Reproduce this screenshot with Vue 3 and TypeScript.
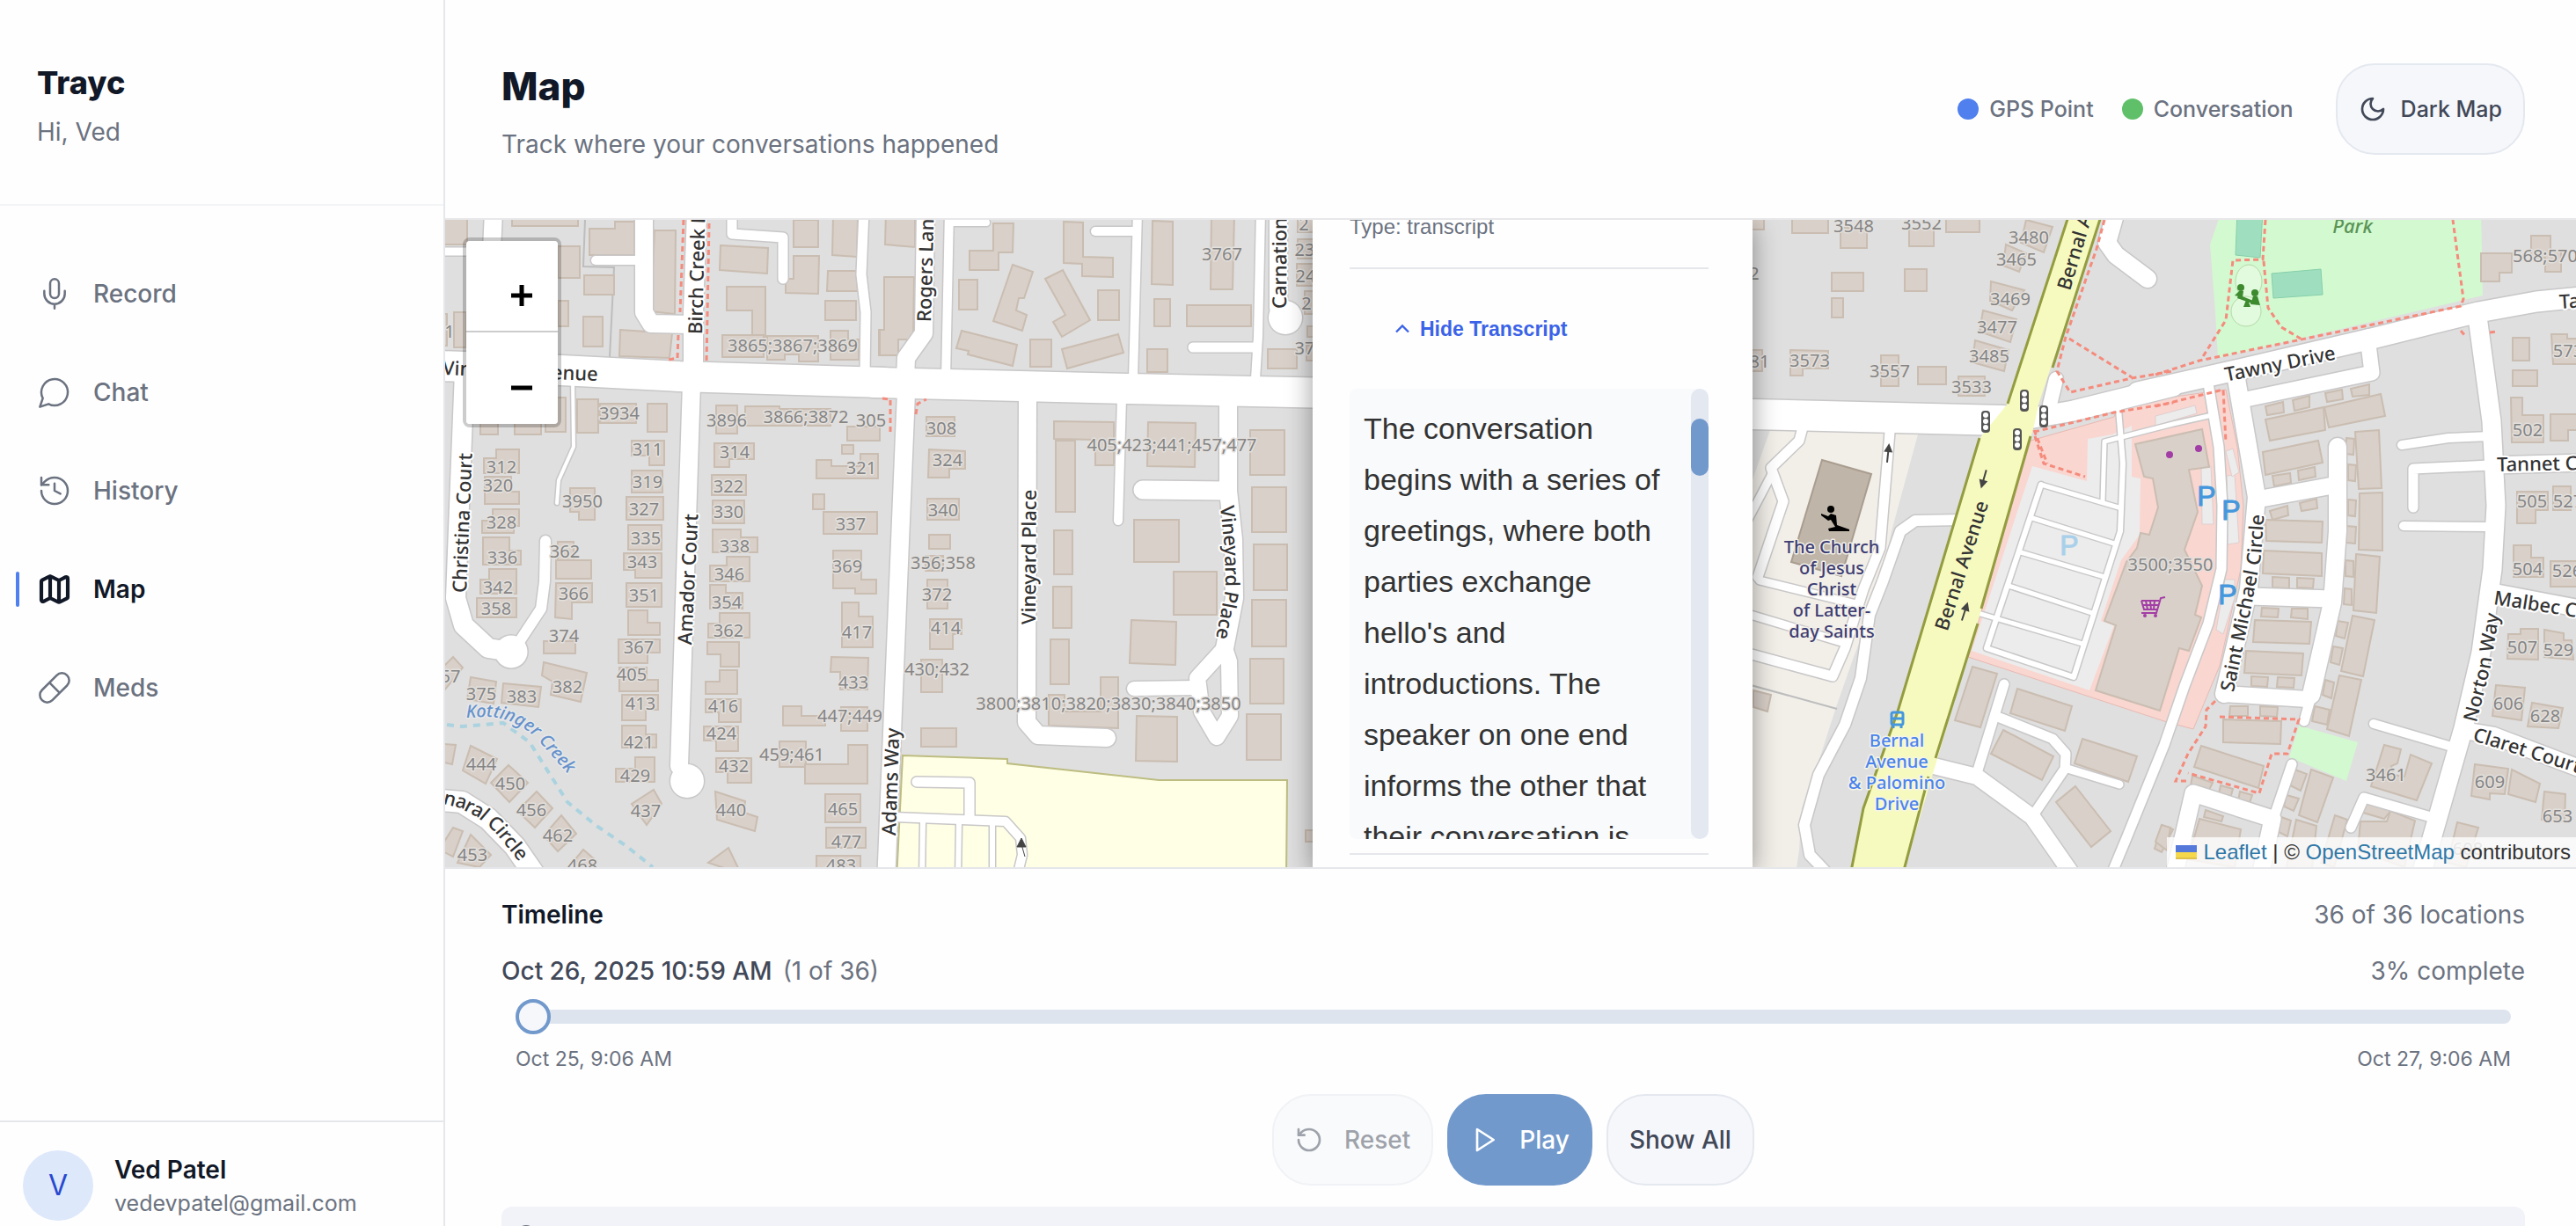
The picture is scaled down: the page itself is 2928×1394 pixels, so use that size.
<script setup lang="ts">
import { ref } from 'vue'

interface Tile {
  x: number
  y: number
  land: [string, string][]
  buildings: string
  roads: [number, string][]
  paths: string[]
  numbers: string
  streets: [string, string][]
}

const nav = [
  { id: 'record', label: 'Record' },
  { id: 'chat', label: 'Chat' },
  { id: 'history', label: 'History' },
  { id: 'map', label: 'Map' },
  { id: 'meds', label: 'Meds' },
]
const active = ref('map')
const position = ref(1)

// Tile grid units: 3 per horizontal pixel, 1568 per 750 vertical pixels.
const px = (t: Tile, x: number) => Math.round(t.x + x / 3)
const py = (t: Tile, y: number) => Math.round(t.y + (y * 750) / 1568)

function points(t: Tile, s: string): string {
  return s
    .trim()
    .split(/\s+/)
    .map((p) => {
      const [x, y] = p.split(',').map(Number)
      return `${px(t, x)},${py(t, y)}`
    })
    .join(' ')
}

// A shape with four bare numbers is a rectangle, otherwise a list of x,y pairs.
function shapes(t: Tile): string[] {
  return t.buildings
    .split(';')
    .map((s) => s.trim())
    .filter((s) => s.length > 0)
    .map((s) => {
      const n = s.split(/[\s,]+/).map(Number)
      if (n.length === 4) {
        const [a, b, c, d] = n
        return points(t, `${a},${b} ${c},${b} ${c},${d} ${a},${d}`)
      }
      return points(t, s)
    })
}

const tiles: Tile[] = [
  {
    x: 505,
    y: 240,
    land: [],
    buildings: `0,0,78,80; 232,0,455,36; 388,84,463,158; 478,152,578,198; 0,245,8,320; 33,240,75,324; 388,214,422,274;
      475,250,541,322; 454,448,524,526; 346,444,414,524; 240,470,330,530; 124,500,182,530; 693,458,758,524; 530,458,655,504;
      136,588 178,588 178,566 254,566 254,622 136,622; 138,632 228,632 228,666 254,666 254,696 138,696;
      130,736 166,736 166,708 254,708 254,748 238,748 238,766 130,766; 133,776 221,776 221,806 262,806 262,840 133,840;
      124,876 154,876 154,850 247,850 247,910 124,910; 112,920,245,966; 430,658 512,658 512,734 460,734 460,716 430,716;
      388,786,440,830; 382,830,500,874; 382,884 505,884 505,930 434,930 434,970 379,966; 340,1022,446,1052;
      340,1072 486,1098 466,1166 362,1150 370,1118 332,1104; 90,1108 178,1118 168,1170 78,1160; 200,1122 330,1132 322,1180 196,1168;
      0,1080 30,1060 62,1086 0,1140; 90,1272 180,1302 140,1362 64,1330; 0,1266 38,1270 28,1316 0,1310;
      220,1318 284,1358 222,1404 160,1358; 316,1380 370,1420 310,1466 250,1426; 400,1436 450,1480 388,1522 338,1484;
      475,1518 520,1545 500,1568 415,1568; 90,1482 158,1530 120,1560 46,1550; 0,1500 30,1465 62,1474 30,1534 0,1525;
      640,545 751,545 751,604 698,604 698,582 640,582; 640,616,745,668; 620,680,746,734; 628,746,740,804;
      612,814 740,814 740,872 652,872 652,852 612,852; 622,884,740,940; 628,950 692,950 692,978 734,978 734,1008 628,1008;
      594,1018 734,1018 734,1050 692,1050 692,1074 594,1074; 598,1085 690,1085 690,1114 728,1114 728,1142 598,1142;
      606,1150 728,1150 728,1186 686,1186 686,1210 606,1210; 606,1222 686,1222 686,1244 722,1244 722,1276 606,1276;
      586,1326 652,1326 652,1298 717,1298 717,1356 586,1356; 714,1376 740,1410 690,1460 638,1410;
      928,462,998,528; 1027,465,1142,510; 1142,470,1318,510; 1374,512,1484,546; 922,552 1057,552 1057,590 972,590 972,608 922,608;
      912,628,1028,676; 916,688,1022,742; 914,756 1012,756 1012,776 1068,776 1068,812 914,812;
      906,842 964,842 964,822 1040,822 1040,880 906,880; 906,888 960,888 960,908 1016,908 1016,946 906,946;
      900,980 940,980 940,956 1040,956 1040,1014 900,1014; 898,1024 1004,1024 1004,1082 942,1082 942,1054 898,1054;
      892,1118 940,1118 940,1092 1000,1092 1000,1148 892,1148; 892,1160 1010,1160 1010,1214 936,1214 936,1192 892,1192;
      886,1226 1002,1226 1002,1284 928,1284 928,1258 886,1258; 928,1300 1046,1300 1046,1358 966,1358 966,1334 928,1334;
      924,1380 1026,1402 1022,1430 1068,1440 1058,1474 930,1446; 968,1514 1010,1575 900,1550;
      496,42 582,42 582,26 648,26 648,104 496,104; 716,46 790,46 786,244 706,238; 600,282 776,290 768,350 598,346;
      942,82 1105,88 1100,148 940,140; 964,180 1094,180 1094,300 1050,300 1050,236 964,236; 947,294,1090,348;
      1102,296 1276,296 1276,358 1210,358 1210,340 1160,340 1160,354 1102,354; 1318,284 1376,284 1376,305 1412,305 1412,354 1318,354; 1192,20,1274,86;
      1190,106 1278,106 1274,196 1164,194 1164,160 1192,160; 1326,10 1410,10 1406,108 1324,104; 1308,142 1404,142 1410,190 1306,190;
      1300,214,1405,260; 1482,282,1500,342; 1357,556,1394,576; 1270,592 1320,592 1320,606 1418,606 1418,578 1478,578 1478,636 1270,636;
      1258,674,1296,708; 1294,716,1476,768; 1326,808 1422,808 1422,876 1472,876 1472,910 1402,910 1402,896 1326,896;
      1355,930 1412,930 1412,964 1462,964 1462,1038 1355,1038; 1320,1060 1447,1062 1443,1138 1350,1138 1350,1096 1318,1096;
      1156,1178 1218,1178 1218,1200 1298,1200 1298,1224 1156,1224; 1354,1180,1442,1236; 1144,1260,1233,1322;
      1230,1314 1378,1314 1378,1268 1442,1268 1442,1362 1230,1362; 1300,1386,1418,1452; 1302,1466,1436,1514; 1268,1532,1420,1575`,
    roads: [
      [34, '-20,367 400,378 800,392 1500,408'],
      [22, '70,380 50,700 38,920 65,985 150,1040 228,1048'],
      [37, '228,1048 229,1048'],
      [12, '250,1030 330,945 343,880 344,785'],
      [20, '168,0 160,140'],
      [9, '-10,97 90,97'],
      [10, '515,118 670,118'],
      [20, '682,0 680,240 705,268 840,270'],
      [22, '862,0 850,240 848,400'],
      [20, '842,410 800,1320'],
      [38, '828,1355 829,1355'],
      [11, '980,0 980,55 1155,62 1155,160'],
      [11, '1430,0 1422,150 1437,240 1435,390'],
      [4, '438,400 440,560 390,640 385,695'],
      [24, '-10,1400 60,1405 150,1445 240,1510 320,1590'],
    ],
    paths: ['815,20 803,240', '797,295 795,350 765,354', '903,30 893,360'],
    numbers: `3934@597,480 3896@962,497 3866;3872@1232,490 305@1455,497 311@693,566 319@693,643 327@682,709 335@686,777
      343@676,835 351@680,914 367@663,1036 405@640,1102 413@668,1170 421@664,1262 429@651,1342 437@688,1425 314@990,572
      322@969,655 330@969,716 338@990,796 346@973,863 354@962,930 362@969,998 416@950,1178 424@944,1242 432@986,1319
      440@978,1424 321@1422,610 337@1385,744 369@1375,845 417@1408,1002 433@1396,1121 447;449@1382,1200 459;461@1186,1293
      465@1359,1421 477@1371,1500 483@1353,1556 312@195,608 320@184,653 328@194,740 336@197,824 342@184,894 358@178,944
      3950@471,690 362@412,810 366@442,909 374@407,1009 382@421,1132 375@127,1148 383@263,1155 57@22,1106 444@125,1315
      450@224,1362 456@298,1424 462@388,1484 468@470,1556 453@97,1530 3865;3867;3869@1188,320 1@18,286`,
    streets: [
      ['Vineyard Avenue', '-6,372 600,388'],
      ['Christina Court', '50,908 72,560'],
      ['Amador Court', '818,1030 842,700'],
      ['Birch Creek Drive', '856,292 872,-200'],
      ['naral Circle', '0,1392 60,1402 130,1428 190,1464 280,1540'],
    ],
  },
  {
    x: 1000,
    y: 240,
    land: [['school', '78,1294 435,1302 435,1313 950,1352 1390,1352 1385,1590 58,1590']],
    buildings: `20,0 120,0 120,86 18,80; 16,156 118,156 114,306 64,306 64,342 0,342 0,282 14,282;
      386,30 456,30 454,98 406,98 406,140 306,140 306,94 386,94; 271,164,334,234;
      452,128 522,144 492,208 474,206 464,236 502,246 486,284 388,262; 280,284 468,318 452,368 300,340 302,332 262,326;
      512,306,586,370; 626,26 694,28 694,108 796,110 794,156 690,154 690,126 626,124; 564,160 624,140 716,260 620,298 590,264 634,246;
      745,188,816,260; 620,328 812,292 830,336 640,374; 930,24 1000,26 998,176 926,174; 1132,10 1210,10 1204,186 1128,186;
      937,210,990,274; 1048,224,1266,274; 912,328,980,382; 1322,328,1422,374; 1424,10,1490,50; 1424,66,1490,112; 1422,126,1490,178;
      1450,190,1490,244; 1458,274,1490,300; 1455,320,1490,356; 160,490,255,536; 168,566 292,570 290,612 236,612 236,634 166,634;
      163,684,270,734; 168,770,240,802; 155,820,215,856; 163,876,231,944; 170,970 280,970 280,1006 250,1006 250,1042 170,1042;
      142,1066,214,1144; 140,1230,262,1274; 594,500 798,502 798,604 734,604 734,543 594,541; 600,545,665,714;
      915,502 1076,504 1074,608 913,606; 594,758,658,864; 590,892,654,992; 583,1018,646,1124;
      576,1150 630,1150 630,1190 752,1190 752,1108 814,1108 812,1230 576,1224; 866,734,1020,834; 1003,858,1150,960;
      858,972 1012,976 1008,1078 853,1074; 875,1200 1015,1202 1013,1308 872,1306; 1263,521,1380,627; 1268,656,1385,764;
      1274,792,1390,902; 1270,925,1385,1034; 1264,1064,1378,1170; 1252,1196,1368,1304; 1453,1472,1490,1500`,
    roads: [
      [34, '-20,407 850,423 1550,433'],
      [20, '155,0 150,290 90,350 88,400'],
      [10, '236,0 224,400'],
      [8, '236,28 362,28'],
      [20, '90,430 45,1190 20,1600'],
      [10, '880,0 865,400'],
      [10, '735,48 870,48'],
      [10, '1298,0 1290,300 1280,400'],
      [11, '1068,324 1285,324'],
      [20, '1360,0 1360,230'],
      [38, '1382,252 1383,252'],
      [20, '504,440 502,1215 540,1245 775,1252'],
      [10, '825,445 813,735'],
      [21, '896,662 1180,665'],
      [20, '1188,450 1187,665 1207,780 1210,920 1175,1040'],
      [18, '1175,1040 1083,1110 1098,1190 1148,1250 1195,1200 1190,1070 1175,1040'],
      [16, '866,1136 1080,1133'],
      [11, '125,1356 305,1358 305,1440'],
      [10, '40,1440 430,1450 480,1490 485,1530 465,1590'],
      [6, '147,1455 145,1590'],
      [6, '270,1455 268,1590'],
      [6, '385,1455 383,1590'],
    ],
    paths: ['10,445 36,448 36,530', '122,482 128,458 160,448'],
    numbers: `3767@1168,102 2@1445,32 23@1448,93 24@1452,155 2@1456,220 37@1448,327 308@210,517 324@230,592 340@217,710
      356;358@215,837 372@195,911 414@225,990 430;432@194,1090 405;423;441;457;477@996,556 3800;3810;3820;3830;3840;3850@780,1170`,
    streets: [
      ['Rogers Lane', '150,264 164,-100'],
      ['Vineyard Place', '508,982 510,600'],
      ['Vineyard Place', '1186,700 1200,800 1202,900 1165,1040'],
      ['Carnation Court', '1362,232 1364,-200'],
      ['Adams Way', '30,1485 46,1200'],
    ],
  },
  {
    x: 1990,
    y: 240,
    land: [
      ['church', '0,517 570,532 480,760 440,900 350,1060 290,1180 240,1290 175,1420 165,1520 150,1590 -30,1590 -30,517'],
      ['plain', '-30,517 65,520 0,650 -30,690'],
      ['retail', '955,545 1240,490 1250,460 1620,425 1660,560 1680,700 1670,850 1600,1080 1510,1232 1420,1215 740,1060'],
      ['parking', '960,606 1145,642 1150,542 1232,530 1300,510 1298,632 1328,636 1325,770 1262,830 1195,975 1240,985 1155,1140 752,1046'],
      ['strip', '1380,510 1380,488 1515,462 1520,480'],
      ['strip', '1535,610 1570,606 1578,745 1540,745'],
      ['strip', '1622,630 1650,628 1665,788 1626,792'],
      ['strip', '1620,570 1645,565 1665,620 1640,632'],
      ['strip', '1618,875 1650,875 1650,920 1612,1005 1588,995'],
    ],
    buildings: `-20,0,46,44; 142,0,264,52; 305,40,395,88; 540,40,623,84; 667,0,780,50; 277,147,384,190; 277,206,314,254; 526,138,599,190;
      -20,330,40,380; 135,330 263,332 263,374 178,374 178,390 135,390; 444,343,503,416; 571,370,665,412; 708,394,798,440;
      940,20 1028,38 1000,98 920,76; 870,80 940,100 915,144 862,130; 820,168 932,188 890,236 816,214;
      792,236 905,258 886,312 780,286; 765,308 880,330 865,380 755,360;
      1312,555 1540,518 1562,608 1495,615 1525,715 1478,805 1540,890 1515,960 1535,965 1495,1045 1460,1040 1395,1187 1175,1140 1245,985 1205,975 1280,835 1318,800 1330,765 1360,770 1390,705 1370,635 1340,632;
      757,1082 840,1100 782,1228 696,1210; 908,1136 1094,1176 1070,1236 884,1194; 860,1234 1032,1296 992,1352 820,1290;
      1130,1254 1318,1296 1288,1356 1104,1312; 1108,1368 1228,1474 1160,1512 1040,1404; 1400,1460 1440,1470 1400,1525 1376,1515;
      10,1140 70,1150 58,1190 8,1180`,
    roads: [
      [34, '-200,478 0,482 860,498'],
      [11, '178,515 165,545 70,610 110,690 25,870'],
      [9, '75,620 -30,760'],
      [11, '475,525 440,800 385,900 320,1040 280,1105 -30,1048'],
      [9, '30,878 360,935'],
      [9, '-20,955 310,1025'],
      [12, '720,733 560,735 510,760 450,880 405,960 375,1110 320,1220 230,1340 182,1460 200,1530 270,1580'],
      [20, '1255,-20 1215,75 1245,105 1352,160'],
      [23, '930,495 1100,475 1440,415'],
      [16, '1040,400 1020,460'],
      [18, '600,1315 770,1345 960,1440 1110,1590'],
      [11, '770,1335 865,1125'],
      [11, '850,1205 1030,1255 1075,1290 1070,1325 970,1430'],
      [9, '1080,1325 1258,1364'],
      [6, '990,650 805,1040 1100,1108 1260,760 1270,600 1253,470'],
      [5, '990,650 1255,705'],
      [5, '960,730 1240,790'],
      [5, '920,812 1205,870'],
      [5, '880,890 1165,955'],
      [5, '775,955 1130,1028'],
      [5, '1200,690 1205,548 1440,505 1560,488'],
    ],
    paths: [
      '1205,20 1180,90 1075,300 1045,380 1090,430 1300,398 1440,380',
      '1085,303 1300,395',
      '965,525 1240,478 1440,455',
      '970,535 1000,600 1140,632',
      '965,520 1010,600',
    ],
    numbers: `3548@352,35 3552@582,30 3480@948,63 3465@906,115 3469@884,210 3477@840,275 3485@813,345 3573@200,355
      3557@473,381 3533@752,419 81@30,357 2@12,148`,
    streets: [],
  },
  {
    x: 2450,
    y: 240,
    land: [
      ['park', '225,0 186,80 205,240 212,350 1115,200 1110,0'],
      ['park', '488,1222 690,1262 652,1355 455,1298'],
      ['pitch', '280,0 366,0 356,110 272,104'],
      ['pitch', '396,148 564,138 570,198 402,208'],
    ],
    buildings: `376,464 435,454 438,478 380,486; 468,450 524,440 526,466 474,474; 580,432 636,424 640,448 584,454; 666,422 728,412 730,436 672,442;
      374,496 572,466 580,520 390,546; 577,466 768,434 782,488 590,514; 366,572 556,546 570,598 376,628; 400,630 460,622 462,646 404,654;
      486,616 542,608 546,632 490,640; 650,540 678,542 676,580 650,578; 658,602 684,604 682,642 658,640; 680,524 762,520 770,658 692,660;
      390,712 450,700 452,724 398,734; 492,694 550,684 552,706 498,712; 376,734 570,738 568,788 378,784; 370,808 568,814 566,868 366,862;
      696,672 774,670 774,808 694,804; 656,686 684,688 682,726 656,724; 650,748 684,750 682,790 650,788; 685,816 766,822 752,956 674,950;
      648,830 676,832 674,870 648,868; 645,896 670,898 668,936 642,934; 398,870 455,872 455,896 398,894; 484,872 540,874 538,896 482,894;
      362,942 420,944 418,966 360,964; 466,944 520,946 518,970 462,966; 338,972 532,976 526,1028 332,1024; 308,1046 503,1052 498,1104 302,1098;
      328,1106 384,1108 382,1132 326,1130; 418,1108 474,1110 470,1134 414,1132; 254,1176 316,1178 314,1200 252,1200; 358,1178 416,1180 414,1202 356,1200;
      232,1208 430,1212 426,1266 230,1262; 672,962 748,972 708,1106 632,1094; 622,974 656,978 646,1016 614,1010; 605,1034 638,1040 628,1078 598,1072;
      626,1104 702,1114 660,1248 584,1232; 578,1114 610,1120 600,1158 570,1150; 542,1178 594,1186 586,1220 534,1212;
      155,1272 368,1320 350,1372 132,1322; 125,1342 194,1358 180,1380 120,1366; 222,1366 264,1374 256,1396 216,1386; 288,1380 330,1388 322,1408 282,1400;
      474,1328 516,1338 494,1378 460,1366; 448,1388 488,1396 470,1426 438,1416; 530,1328 606,1346 552,1452 488,1436; 430,1440 462,1448 450,1486 420,1476;
      480,1446 548,1462 530,1580 446,1560; 612,1436 655,1446 610,1560 565,1550; 780,1268 838,1280 826,1312 804,1320 810,1340 850,1345 870,1292 942,1312 890,1400 734,1368;
      150,1444 290,1470 270,1560 110,1540; 170,1424 232,1438 224,1450 165,1440; 720,1406 804,1424 780,1444 708,1430;
      700,1450 790,1450 800,1426 886,1448 850,1560 690,1520; 1030,1452 1100,1466 1060,1560 996,1550; 0,1500 20,1460 50,1466 40,1520;
      1110,100 1216,100 1216,146 1172,146 1172,168 1110,168; 1280,58 1348,58 1348,96 1384,96 1384,144 1330,144 1330,110 1280,110;
      1218,302,1276,356; 1350,292 1404,292 1404,304 1450,304 1450,364 1356,364; 1218,378,1302,416; 1212,444 1252,444 1252,486 1324,486 1324,550 1216,550;
      1346,482 1450,482 1450,520 1408,520 1408,546 1346,546; 1232,666 1338,666 1338,710 1296,710 1296,742 1232,742; 1356,654,1416,710;
      1220,794 1282,794 1282,824 1324,824 1324,870 1220,870; 1346,832,1450,892; 1204,1006 1246,1006 1246,994 1306,994 1306,1066 1200,1064;
      1326,996 1392,1004 1392,1020 1420,1020 1424,1066 1326,1060; 1160,1126 1260,1134 1248,1210 1148,1200; 1284,1168 1390,1182 1374,1230 1268,1226;
      1090,1314 1202,1326 1190,1386 1140,1384 1140,1398 1076,1390; 1214,1328 1312,1360 1296,1404 1204,1386; 1326,1380 1398,1386 1394,1450 1316,1446`,
    roads: [
      [23, '-60,430 300,375 750,302 1100,240 1300,215 1450,205'],
      [11, '180,410 215,560 228,700 225,850 180,980 100,1130 30,1270 -100,1490 -160,1590'],
      [20, '275,400 345,680 318,900 235,1148'],
      [18, '235,1148 520,1160'],
      [19, '345,685 620,650'],
      [20, '620,560 622,760 602,930 530,1150'],
      [11, '540,1130 508,1212'],
      [19, '320,915 600,922'],
      [17, '310,448 738,384 722,300'],
      [21, '1097,250 1145,500 1160,700 1150,850 1110,1050 1050,1230 940,1500 900,1590'],
      [10, '840,557 1000,540 1140,535'],
      [11, '878,705 880,612 1140,605'],
      [10, '845,748 1140,750'],
      [19, '1150,605 1450,598'],
      [19, '1150,905 1450,945'],
      [19, '1060,1235 1150,1245 1450,1325'],
      [10, '745,1218 1020,1275'],
      [11, '665,1465 710,1395 940,1440'],
      [11, '465,1315 400,1450'],
      [19, '60,1590 130,1385 400,1445 355,1590'],
    ],
    paths: [
      '0,388 150,355 540,300 1040,225 1050,210 1015,20',
      '375,20 365,115 265,118 240,260 160,350',
      '370,120 385,230 430,275 495,303',
      '0,465 230,425 240,550',
      '1040,285 1060,298',
      '1140,288 1160,286',
      '220,1203 490,1208 450,1290 395,1290 355,1385 110,1335',
      '205,1165 175,1185 170,1225 110,1290 70,1355 110,1355',
    ],
    numbers: `568;570@1330,106 573@1408,333 502@1268,520 505@1284,690 527@1408,690 504@1270,851 526@1404,856 507@1250,1036
      529@1374,1043 606@1202,1170 628@1330,1200 609@1140,1356 653@1372,1438 3461@786,1340 3500;3550@51,840 608@1065,1516`,
    streets: [
      ['Tawny Drive', '237,388 620,334'],
      ['Tawny Drive', '1378,216 1900,190'],
      ['Saint Michael Circle', '242,1142 300,950 335,820 355,650'],
      ['Norton Way', '1072,1212 1120,1080 1160,900'],
      ['Tannet Court', '1165,603 1900,592'],
      ['Malbec Court', '1155,918 1400,945 1900,1000'],
      ['Claret Court', '1085,1242 1434,1318 1600,1360'],
    ],
  },
]

const roadCoords = tiles.flatMap((t) => t.roads.map(([w, s]) => ({ w, p: points(t, s) })))
const land = tiles.flatMap((t) => t.land.map(([kind, s]) => ({ kind, p: points(t, s) })))
const buildings = tiles.flatMap(shapes)
const footpaths = tiles.flatMap((t) => t.paths.map((s) => points(t, s)))
const houseNumbers = tiles.flatMap((t) =>
  t.numbers.trim().split(/\s+/).map((s) => {
    const [text, at] = s.split('@')
    const [x, y] = at.split(',').map(Number)
    return { text, x: px(t, x), y: py(t, y) + 7 }
  }),
)
const streets = tiles.flatMap((t, i) =>
  t.streets.map(([text, s], j) => ({ text, id: `street-${i}-${j}`, d: 'M' + points(t, s).replace(/ /g, ' L') })),
)
const east = tiles[2]
const bernal = points(east, '1090,0 875,458 785,535 500,1190 385,1420 335,1590 512,1590 745,1050 965,510 980,460 1200,0')
const bernalWest = [points(east, '1090,0 875,458'), points(east, '780,540 500,1190 385,1420 335,1590')]
const bernalEast = [points(east, '1200,0 1030,372'), points(east, '955,535 785,945'), points(east, '775,980 630,1300'), points(east, '605,1345 512,1590')]
const bernalLabels = [
  { id: 'bernal-s', d: 'M' + points(east, '648,996 860,530').replace(' ', ' L'), text: 'Bernal Avenue' },
  { id: 'bernal-n', d: 'M' + points(east, '1064,186 1230,-200').replace(' ', ' L'), text: 'Bernal Avenue' },
]
const signals = [[800, 500], [932, 449], [998, 487], [908, 542]].map(([x, y]) => `translate(${px(east, x)} ${py(east, y)})`)
const arrows = [[468, 578, 6], [795, 636, 196], [728, 953, 18]].map(([x, y, r]) => `translate(${px(east, x)} ${py(east, y)}) rotate(${r})`)
const church = ['The Church', 'of Jesus', 'Christ', 'of Latter-', 'day Saints']
const stop = ['Bernal', 'Avenue', '& Palomino', 'Drive']
</script>

<template>
  <div class="app">
    <aside class="sidebar">
      <div class="brand">
        <h2>Trayc</h2>
        <p>Hi, Ved</p>
      </div>
      <nav class="nav">
        <a v-for="n in nav" :key="n.id" href="#" :class="{ on: n.id === active }" @click.prevent="active = n.id">
          <svg class="icon" viewBox="0 0 24 24" aria-hidden="true">
            <g v-if="n.id === 'record'"><rect x="9" y="2" width="6" height="13" rx="3" /><path d="M19 10v2a7 7 0 0 1-14 0v-2M12 19v3" /></g>
            <path v-else-if="n.id === 'chat'" d="M7.9 20A9 9 0 1 0 4 16.1L2 22Z" />
            <g v-else-if="n.id === 'history'"><path d="M3 12a9 9 0 1 0 9-9 9.75 9.75 0 0 0-6.74 2.74L3 8" /><path d="M3 3v5h5M12 7v5l4 2" /></g>
            <g v-else-if="n.id === 'map'"><path d="M14.1 5.55a2 2 0 0 0 1.8 0l3.65-1.83A1 1 0 0 1 21 4.62v12.76a1 1 0 0 1-.55.9l-4.55 2.27a2 2 0 0 1-1.8 0l-4.2-2.1a2 2 0 0 0-1.8 0l-3.65 1.83A1 1 0 0 1 3 19.38V6.62a1 1 0 0 1 .55-.9L8.1 3.45a2 2 0 0 1 1.8 0zM15 5.76v15M9 3.24v15" /></g>
            <path v-else d="m10.5 20.5 10-10a4.95 4.95 0 1 0-7-7l-10 10a4.95 4.95 0 1 0 7 7ZM8.5 8.5l7 7" />
          </svg>
          <span>{{ n.label }}</span>
        </a>
      </nav>
      <div class="user">
        <span class="avatar">V</span>
        <div>
          <strong>Ved Patel</strong>
          <span class="mail">vedevpatel@gmail.com</span>
        </div>
      </div>
    </aside>

    <main class="main">
      <header class="head">
        <div>
          <h1>Map</h1>
          <p>Track where your conversations happened</p>
        </div>
        <div class="tools">
          <ul class="legend">
            <li><i class="dot gps"></i>GPS Point</li>
            <li><i class="dot talk"></i>Conversation</li>
          </ul>
          <button type="button" class="btn dark">
            <svg class="icon" viewBox="0 0 24 24" aria-hidden="true"><path d="M12 3a6 6 0 0 0 9 9 9 9 0 1 1-9-9Z" /></svg>
            Dark Map
          </button>
        </div>
      </header>

      <section class="map" aria-label="Map">
        <svg class="canvas" viewBox="506 250 2422 736" preserveAspectRatio="xMidYMid slice">
          <rect x="0" y="0" width="3400" height="1400" fill="#dfdfdf" />
          <polygon v-for="(l, i) in land" :key="'l' + i" :points="l.p" :class="l.kind" />
          <polyline class="fence" points="665,250 663,303 698,304 693,406" />
          <polyline class="fence" points="1990,779 2088,806" />
          <polyline class="creek" points="508,824 525,826 572,822 602,844 645,912 678,939 712,962 742,986" />
          <polygon v-for="(b, i) in buildings" :key="'b' + i" :points="b" class="building" />
          <polygon points="2071,523 2127,539 2093,655 2036,639" class="chapel" />
          <g class="play"><ellipse cx="2556" cy="320" rx="15" ry="19" /><ellipse cx="2553" cy="354" rx="17" ry="17" /></g>
          <polyline v-for="(r, i) in roadCoords" :key="'c' + i" :points="r.p" :stroke-width="r.w + 3" class="casing" />
          <polyline v-for="(r, i) in roadCoords" :key="'r' + i" :points="r.p" :stroke-width="r.w" class="road" />
          <polygon :points="bernal" fill="#f7fabf" />
          <polyline v-for="(b, i) in bernalWest.concat(bernalEast)" :key="'e' + i" :points="b" class="edge" />
          <polyline v-for="(f, i) in footpaths" :key="'f' + i" :points="f" class="foot" />
          <g class="numbers">
            <text v-for="(n, i) in houseNumbers" :key="'n' + i" :x="n.x" :y="n.y">{{ n.text }}</text>
          </g>
          <defs>
            <path v-for="s in streets" :id="s.id" :key="s.id" :d="s.d" />
            <path v-for="s in bernalLabels" :id="s.id" :key="s.id" :d="s.d" />
            <path id="kottinger" d="M530,816 L560,815 Q590,820 610,840 L650,885" />
          </defs>
          <g class="streets">
            <text v-for="s in streets" :key="s.id" dy="8"><textPath :href="'#' + s.id">{{ s.text }}</textPath></text>
          </g>
          <g class="streets bernal">
            <text v-for="s in bernalLabels" :key="s.id" dy="8"><textPath :href="'#' + s.id">{{ s.text }}</textPath></text>
          </g>
          <text class="creekname"><textPath href="#kottinger">Kottinger Creek</textPath></text>
          <g class="church-name"><text v-for="(c, i) in church" :key="c" x="2082" :y="629 + i * 24">{{ c }}</text></g>
          <g class="stop-name"><text v-for="(c, i) in stop" :key="c" x="2156" :y="849 + i * 24">{{ c }}</text></g>
          <text x="2674" y="265" class="park-name">Park</text>
          <g class="parking-sign">
            <text x="2352" y="631" class="faint">P</text>
            <text x="2508" y="575">P</text>
            <text x="2536" y="591">P</text>
            <text x="2532" y="687">P</text>
          </g>
          <g v-for="s in signals" :key="s" :transform="s">
            <rect x="-5" y="-12" width="10" height="25" rx="4" fill="#555" />
            <circle cy="-7" r="3" fill="#fff" /><circle cy="0" r="3" fill="#fff" /><circle cy="7" r="3" fill="#fff" />
          </g>
          <g v-for="a in arrows" :key="a" :transform="a"><path d="M0 10V-4" stroke="#444" stroke-width="2" /><path d="M-5-2 0-12 5-2Z" fill="#444" /></g>
          <path d="M1161 953l-5 10h10zM1161 960l4 14" fill="#444" stroke="#444" stroke-width="1" />
          <g transform="translate(2070 575)" fill="#000"><circle cx="11" cy="4" r="4" /><path d="M0 9l8 3 3-3 6 2 1 11 14 5v2H9l-1-3 8-2-5-8-3 1-8-6z" /></g>
          <g fill="none" stroke="#a33da6" stroke-width="2"><path d="M2461 679l-5 1-5 17h-17M2434 683h20M2434 683l3 10h15M2439 683l2 10M2444 683l1 10M2449 683l-1 10M2435 688h18" /><circle cx="2438" cy="700" r="1" /><circle cx="2450" cy="700" r="1" /></g>
          <g fill="#a33da6"><circle cx="2466" cy="517" r="4" /><circle cx="2499" cy="510" r="4" /></g>
          <g fill="none" stroke="#4597dd" stroke-width="3"><rect x="2150" y="810" width="13" height="14" rx="2" /><path d="M2150 817h13M2152 824v4M2161 824v4" /></g>
          <g fill="#3d8a2f"><circle cx="2547" cy="327" r="4" /><circle cx="2563" cy="333" r="4" /><path d="M2540 336l5-5h5l-1 7zM2558 346l3-9h5l3 10zM2544 335l22 9-1 3-22-8zM2550 349l3-8h2l3 8z" /></g>
        </svg>

        <div class="zoom">
          <button type="button" aria-label="Zoom in"><svg viewBox="0 0 24 24" aria-hidden="true"><path d="M0 12h24M12 0v24" /></svg></button>
          <button type="button" aria-label="Zoom out"><svg viewBox="0 0 24 24" aria-hidden="true"><path d="M0 12h24" /></svg></button>
        </div>

        <article class="popup">
          <p class="type">Type: transcript</p>
          <button type="button" class="toggle">
            <svg viewBox="0 0 24 24" aria-hidden="true"><path d="m6 15 6-6 6 6" /></svg>
            Hide Transcript
          </button>
          <div class="transcript">
            <p>The conversation begins with a series of greetings, where both parties exchange hello's and introductions. The speaker on one end informs the other that their conversation is</p>
            <span class="track"><span class="thumb"></span></span>
          </div>
        </article>

        <div class="credit">
          <svg viewBox="0 0 24 16" aria-hidden="true"><path fill="#5578db" d="M0 0h24v8H0z" /><path fill="#f6d84c" d="M0 8h24v8H0z" /><path fill="#dfc04a" d="M0 14h24v2H0z" /></svg>
          <span><a href="#">Leaflet</a> | © <a href="#">OpenStreetMap</a> contributors</span>
        </div>
      </section>

      <section class="timeline">
        <div class="row">
          <h3>Timeline</h3>
          <span class="muted">36 of 36 locations</span>
        </div>
        <div class="row second">
          <label for="moment">Oct 26, 2025 10:59 AM <span class="muted">(1 of 36)</span></label>
          <span class="muted">3% complete</span>
        </div>
        <div class="range">
          <input id="moment" v-model.number="position" type="range" min="1" max="36" />
          <div class="ends"><span>Oct 25, 9:06 AM</span><span>Oct 27, 9:06 AM</span></div>
        </div>
        <div class="actions">
          <button type="button" class="btn" disabled>
            <svg class="icon" viewBox="0 0 24 24" aria-hidden="true"><path d="M3 12a9 9 0 1 0 9-9 9.75 9.75 0 0 0-6.74 2.74L3 8" /><path d="M3 3v5h5" /></svg>
            Reset
          </button>
          <button type="button" class="btn primary">
            <svg class="icon" viewBox="0 0 24 24" aria-hidden="true"><path d="m6 3 14 9-14 9z" /></svg>
            Play
          </button>
          <button type="button" class="btn">Show All</button>
        </div>
        <div class="card">
          <svg class="icon" viewBox="0 0 24 24" aria-hidden="true"><circle cx="12" cy="12" r="10" /></svg>
        </div>
      </section>
    </main>
  </div>
</template>

<style>
body {
  margin: 0;
  background: #fefefe;
}
</style>

<style scoped>
* {
  box-sizing: border-box;
}
.app {
  display: flex;
  height: 100vh;
  overflow: hidden;
  font-family: Inter, 'Open Sans', sans-serif;
  font-size: 28px;
  line-height: 40px;
  color: #6b7280;
  background: #fefefe;
}
h1, h2, h3, p, ul {
  margin: 0;
  padding: 0;
}
button {
  font: inherit;
  color: inherit;
}
.icon {
  flex: none;
  width: 32px;
  height: 32px;
  fill: none;
  stroke: currentColor;
  stroke-width: 2;
  stroke-linecap: round;
  stroke-linejoin: round;
}
.sidebar {
  flex: none;
  width: 506px;
  display: flex;
  flex-direction: column;
  border-right: 2px solid #e5e7eb;
}
.brand {
  padding: 70px 42px 62px;
  border-bottom: 2px solid #f3f4f6;
}
.brand h2 {
  margin-bottom: 12px;
  font-size: 36px;
  line-height: 48px;
  font-weight: 800;
  color: #111827;
}
.nav {
  flex: 1;
  padding-top: 44px;
}
.nav a {
  position: relative;
  display: flex;
  align-items: center;
  gap: 24px;
  height: 112px;
  padding-left: 42px;
  font-weight: 500;
  color: #6b7280;
  text-decoration: none;
}
.nav .icon {
  width: 40px;
  height: 40px;
  stroke-width: 1.5;
}
.nav a.on {
  font-weight: 600;
  color: #111827;
}
.nav a.on .icon {
  stroke-width: 2.5;
}
.nav a.on::before {
  content: '';
  position: absolute;
  left: 18px;
  width: 4px;
  height: 40px;
  border-radius: 2px;
  background: #4f80f0;
}
.user {
  display: flex;
  align-items: center;
  gap: 24px;
  padding: 32px 26px 6px;
  border-top: 2px solid #e5e7eb;
}
.avatar {
  width: 80px;
  height: 80px;
  border-radius: 50%;
  background: #dde8fb;
  color: #2848d0;
  font-size: 32px;
  line-height: 80px;
  text-align: center;
}
.user strong {
  display: block;
  font-weight: 600;
  color: #111827;
}
.mail {
  display: block;
  font-size: 25px;
  line-height: 36px;
}
.main {
  flex: 1;
  min-width: 0;
  display: flex;
  flex-direction: column;
}
.head {
  flex: none;
  min-height: 250px;
  display: flex;
  align-items: center;
  justify-content: space-between;
  padding: 0 58px 0 64px;
  border-bottom: 2px solid #e8e8ea;
}
.head h1 {
  margin: 4px 0 16px;
  font-size: 44px;
  line-height: 60px;
  font-weight: 800;
  color: #111827;
}
.tools {
  display: flex;
  align-items: center;
  gap: 48px;
}
.legend {
  display: flex;
  gap: 32px;
  list-style: none;
  font-size: 25px;
  font-weight: 500;
}
.legend li {
  display: flex;
  align-items: center;
  gap: 12px;
}
.dot {
  width: 24px;
  height: 24px;
  border-radius: 50%;
}
.gps {
  background: #4f80ee;
}
.talk {
  background: #5fc069;
}
.btn {
  display: flex;
  align-items: center;
  gap: 24px;
  height: 104px;
  padding: 0 24px;
  border: 2px solid #e4e8ef;
  border-radius: 44px;
  background: #f6f7fb;
  color: #414858;
  font-weight: 500;
}
.btn.dark {
  gap: 16px;
  font-size: 25px;
}
.btn:disabled {
  opacity: 0.5;
}
.btn.primary {
  border-color: #7299cc;
  background: #7299cc;
  color: #fff;
}
.map {
  flex: 1;
  min-height: 0;
  position: relative;
  overflow: hidden;
  background: #dfdfdf;
}
.canvas {
  display: block;
  width: 100%;
  height: 100%;
}
.school { fill: #ffffe5; stroke: #bdbd82; stroke-width: 2; }
.church { fill: #f2efe9; }
.plain { fill: #dfdfdf; }
.retail { fill: #f9d6d0; stroke: #e8b9b2; }
.parking { fill: #ececec; }
.strip { fill: #ececec; stroke: #e0cfcf; }
.park { fill: #d3f9d0; }
.pitch { fill: #9fdfc0; stroke: #85cfaa; }
.building { fill: #d9d0c9; stroke: #cabdb1; stroke-width: 2; }
.chapel { fill: #bfb5a8; stroke: #a99d8f; stroke-width: 2; }
.play { fill: #e2fadd; stroke: #b5d8a8; }
.fence { fill: none; stroke: #bdbdbd; stroke-width: 2; }
.creek { fill: none; stroke: #aad3df; stroke-width: 4; stroke-dasharray: 8 7; }
.casing, .road { fill: none; stroke-linecap: round; stroke-linejoin: round; }
.casing { stroke: #c9c7c7; }
.road { stroke: #fff; }
.edge { fill: none; stroke: #949c40; stroke-width: 3; }
.foot { fill: none; stroke: #f58b7c; stroke-width: 3; stroke-dasharray: 6 4; }
.canvas text { font-family: 'Noto Sans', 'Open Sans', sans-serif; paint-order: stroke; stroke-linejoin: round; }
.numbers { font-size: 20px; fill: #858585; text-anchor: middle; stroke: #e3e0dd; stroke-width: 3; }
.streets { font-size: 22px; font-weight: 500; fill: #333; stroke: #fff; stroke-width: 4; }
.bernal { stroke: #f7fabf; }
.creekname { font-size: 20px; font-style: italic; font-weight: 500; fill: #6591cb; stroke: #e6e8ea; stroke-width: 3; }
.church-name { font-size: 20px; font-weight: 500; fill: #3d3d72; text-anchor: middle; stroke: #f2efe9; stroke-width: 3; }
.stop-name { font-size: 20px; font-weight: 500; fill: #4b83ee; text-anchor: middle; stroke: #f4f5e6; stroke-width: 3; }
.park-name { font-size: 22px; font-style: italic; font-weight: 500; fill: #5a9456; text-anchor: middle; }
.canvas .parking-sign text { font-family: 'Liberation Sans', sans-serif; font-size: 32px; text-anchor: middle; fill: #4597dd; stroke: #4597dd; stroke-width: 1; }
.canvas .parking-sign .faint { fill: #a9d0ea; stroke: #a9d0ea; }
.zoom {
  position: absolute;
  left: 20px;
  top: 20px;
  width: 112px;
  border: 4px solid rgba(0, 0, 0, 0.2);
  border-radius: 8px;
  background-clip: padding-box;
}
.zoom button {
  display: flex;
  align-items: center;
  justify-content: center;
  width: 104px;
  height: 104px;
  padding: 22px 0 0 22px;
  border: 0;
  background: #fff;
}
.zoom button:first-child {
  border-bottom: 2px solid #ccc;
  border-radius: 4px 4px 0 0;
}
.zoom button:last-child {
  border-radius: 0 0 4px 4px;
}
.zoom svg {
  width: 24px;
  height: 24px;
  stroke: #000;
  stroke-width: 5;
}
.popup {
  position: absolute;
  left: calc(50% - 225px);
  top: 0;
  bottom: 0;
  width: 500px;
  display: flex;
  flex-direction: column;
  padding: 0 50px 14px 42px;
  background: #fefefe;
  box-shadow: 0 6px 28px rgba(0, 0, 0, 0.4);
  font-family: 'Liberation Sans', Arial, sans-serif;
  font-size: 24px;
}
.type {
  flex: none;
  margin-top: -12px;
  padding-bottom: 26px;
  border-bottom: 2px solid #e5e7eb;
}
.toggle {
  flex: none;
  height: 136px;
  display: flex;
  align-items: center;
  gap: 6px;
  padding: 0 0 0 46px;
  border: 0;
  background: none;
  color: #3b63e8;
  font-size: 23px;
  font-weight: 700;
}
.toggle svg {
  width: 28px;
  height: 28px;
  fill: none;
  stroke: currentColor;
  stroke-width: 2;
}
.transcript {
  flex: 1;
  min-height: 0;
  display: flex;
  overflow: hidden;
  border-radius: 8px;
  background: #f8fafc;
}
.popup::after {
  content: '';
  flex: none;
  height: 2px;
  margin-top: 16px;
  background: #e5e7eb;
}
.transcript p {
  flex: 1;
  padding: 16px;
  font-size: 34px;
  line-height: 58px;
  color: #333;
}
.track {
  width: 20px;
  padding-top: 34px;
  border-radius: 10px;
  background: #e3e8f1;
}
.thumb {
  display: block;
  height: 65px;
  border-radius: 10px;
  background: #7299cc;
}
.credit {
  position: absolute;
  right: 0;
  bottom: 0;
  display: flex;
  align-items: center;
  gap: 8px;
  height: 34px;
  padding: 0 6px 0 10px;
  background: rgba(255, 255, 255, 0.8);
  font-family: 'Liberation Sans', Arial, sans-serif;
  font-size: 24px;
  line-height: 34px;
  color: #333;
}
.credit a {
  color: #2f78a8;
  text-decoration: none;
}
.credit svg {
  width: 24px;
  height: 16px;
}
.timeline {
  flex: none;
  padding: 32px 58px 0 64px;
  border-top: 2px solid #e5e7eb;
}
.row {
  display: flex;
  justify-content: space-between;
}
.row h3 {
  font-size: 28px;
  font-weight: 600;
  color: #111827;
}
.second {
  margin-top: 24px;
}
.row label {
  display: flex;
  gap: 12px;
  font-weight: 500;
  color: #414858;
}
.row .muted {
  font-weight: 400;
  color: #6b7280;
}
.range {
  padding: 12px 16px 0;
}
.range input {
  display: block;
  width: 100%;
  height: 40px;
  margin: 0;
  appearance: none;
  background: none;
}
.range input::-webkit-slider-runnable-track {
  height: 16px;
  border-radius: 8px;
  background: #dde4ee;
}
.range input::-webkit-slider-thumb {
  appearance: none;
  width: 40px;
  height: 40px;
  margin-top: -12px;
  border: 4px solid #7299cc;
  border-radius: 50%;
  background: #f6f7fb;
}
.ends {
  display: flex;
  justify-content: space-between;
  margin-top: 12px;
  font-size: 23px;
  line-height: 32px;
}
.actions {
  display: flex;
  justify-content: center;
  gap: 16px;
  margin-top: 24px;
}
.card {
  height: 22px;
  margin-top: 24px;
  padding: 20px 16px 0;
  overflow: hidden;
  border-radius: 12px 12px 0 0;
  background: #f2f3f8;
}
.card .icon {
  display: block;
  width: 24px;
  height: 24px;
}
</style>
